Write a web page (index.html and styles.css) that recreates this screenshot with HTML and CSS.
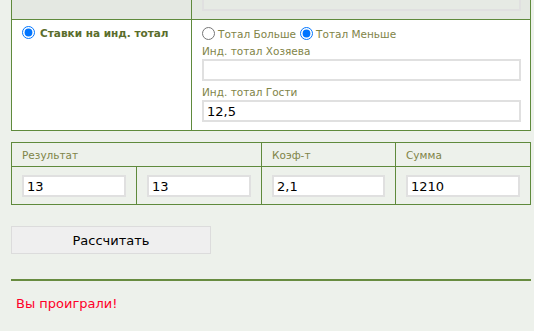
FILE: index.html
```html
<!DOCTYPE html>
<html lang="ru">
<head>
  <meta charset="UTF-8" />
  <title>Калькулятор ставок</title>
  <link rel="stylesheet" href="styles.css">
</head>
<body>

  <div class="page">
    <table class="bets">
      <tr class="top-row">
        <td class="left-cell"></td>
        <td class="right-cell"><input type="text" class="field"></td>
      </tr>
      <tr>
        <td class="left-cell choice">
          <label class="main-option"><input type="radio" name="bet" checked> Ставки на инд. тотал</label>
        </td>
        <td class="right-cell">
          <div class="options">
            <label><input type="radio" name="total"> Тотал Больше</label>
            <label><input type="radio" name="total" checked> Тотал Меньше</label>
          </div>
          <div class="caption">Инд. тотал Хозяева</div>
          <input type="text" class="field">
          <div class="caption">Инд. тотал Гости</div>
          <input type="text" class="field" value="12,5">
        </td>
      </tr>
    </table>

    <table class="result">
      <tr>
        <th colspan="2">Результат</th>
        <th>Коэф-т</th>
        <th>Сумма</th>
      </tr>
      <tr>
        <td class="c1"><input type="text" class="field" value="13"></td>
        <td class="c2"><input type="text" class="field" value="13"></td>
        <td class="c3"><input type="text" class="field" value="2,1"></td>
        <td class="c4"><input type="text" class="field" value="1210"></td>
      </tr>
    </table>

    <button class="calc">Рассчитать</button>

    <hr class="line">

    <p class="message">Вы проиграли!</p>
  </div>

</body>
</html>
```

FILE: styles.css
```css
:root {
  --bg: #edf1eb;
  --bg-dark: #e4e8e2;
  --green: #5f8a3c;
  --olive: #7f8448;
  --olive-dark: #5a6d2c;
}

body {
  margin: 0;
  background: var(--bg);
  font-family: "DejaVu Sans", Verdana, sans-serif;
  font-size: 10.5px;
  color: var(--olive);
}

.page {
  margin-top: -20px;
  padding-left: 11px;
  width: 520px;
}

table {
  border-collapse: collapse;
  width: 520px;
}

td, th {
  border: 1px solid var(--green);
  vertical-align: top;
}

.field {
  display: block;
  box-sizing: border-box;
  height: 22px;
  border: 2px solid #e0e0e0;
  background: #fff;
  padding: 0 3px;
  font-family: "DejaVu Sans", Verdana, sans-serif;
  font-size: 13px;
  color: #000;
  margin: 0;
  outline: none;
}

.bets .left-cell {
  width: 179px;
}

.top-row td {
  background: var(--bg-dark);
  height: 22px;
  padding: 8px 0 8px 10px;
}

.top-row .field {
  width: 319px;
  background: #e6eae4;
}

.choice {
  background: #fff;
  padding: 6px 0 0 10px;
}

.main-option {
  display: flex;
  align-items: center;
  gap: 5px;
  font-weight: bold;
  color: var(--olive-dark);
}

.main-option input {
  margin: 0;
  width: 13px;
  height: 13px;
}

.right-cell {
  background: #fff;
  padding: 5px 9px 8px 10px;
}

.right-cell .field {
  width: 319px;
}

.options {
  display: flex;
  align-items: center;
  gap: 4px;
  height: 17px;
}

.options label {
  display: flex;
  align-items: center;
  gap: 3px;
}

.options input {
  margin: 0;
  width: 13px;
  height: 13px;
}

.caption {
  line-height: 14px;
  margin: 2px 0 1px;
}

.caption + .field + .caption {
  margin-top: 4px;
}

.result {
  margin-top: 11px;
}

.result th {
  text-align: left;
  font-weight: normal;
  height: 23px;
  padding: 0 0 0 10px;
  vertical-align: middle;
}

.result td {
  padding: 8px 0 7px 10px;
}

.result .c1, .result .c2 {
  width: 114px;
}

.result .c3 {
  width: 123px;
}

.c1 .field, .c2 .field {
  width: 104px;
}

.c3 .field {
  width: 113px;
}

.c4 .field {
  width: 114px;
}

.calc {
  display: block;
  margin-top: 21px;
  width: 200px;
  height: 28px;
  background: #efefef;
  border: 1px solid #dcdcdc;
  font-family: "DejaVu Sans", Verdana, sans-serif;
  font-size: 13px;
  color: #000;
}

.line {
  margin: 25px 0 0;
  border: none;
  height: 2px;
  background: #688c40;
  width: 520px;
}

.message {
  margin: 15px 0 0 5px;
  font-size: 13px;
  color: #ff0028;
}
```
